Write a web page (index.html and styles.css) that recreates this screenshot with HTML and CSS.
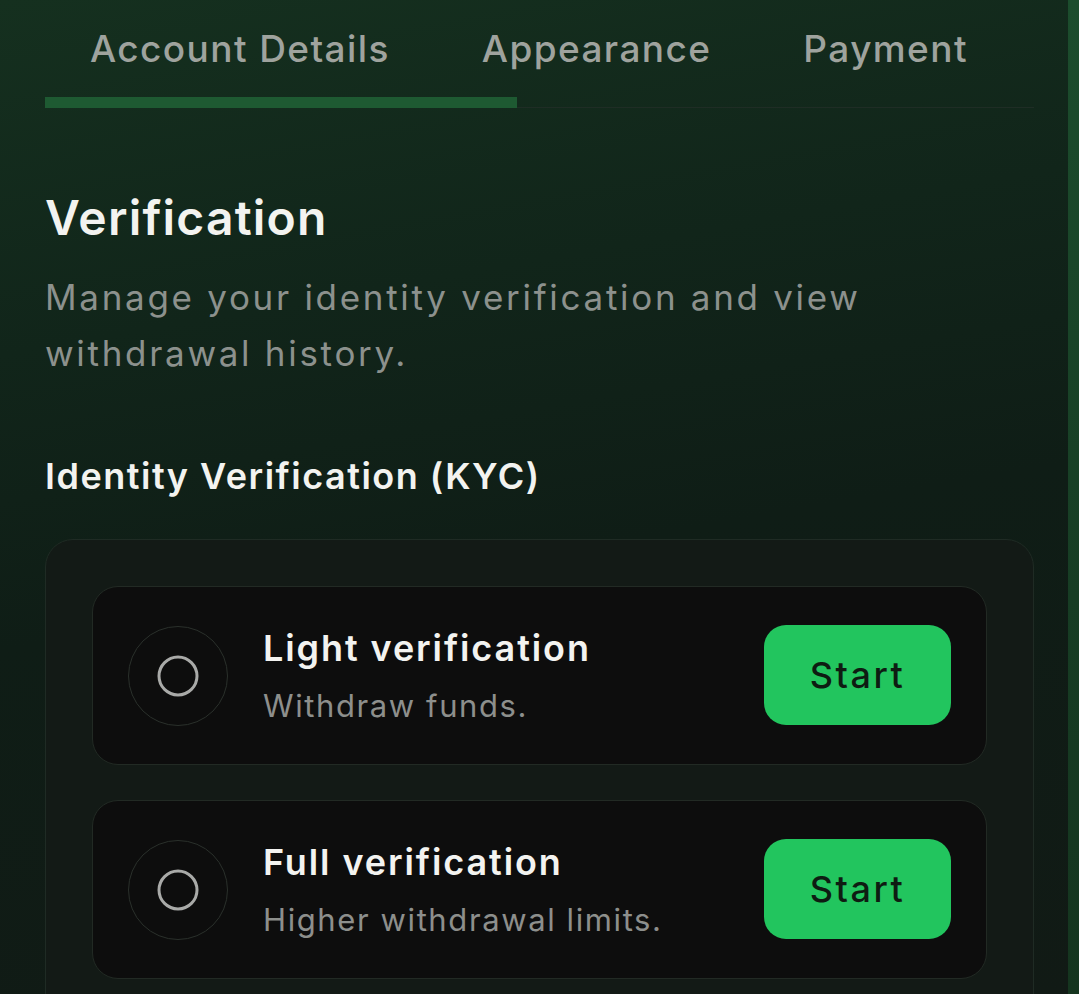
FILE: index.html
```html
<!DOCTYPE html>
<html lang="en">
<head>
  <meta charset="UTF-8" />
  <meta name="viewport" content="width=device-width, initial-scale=1.0"/>
  <title>Settings - Verification</title>
  <link rel="stylesheet" href="styles.css">
</head>
<body>
  <div class="page">
    <main class="panel">
      <nav class="tabs">
        <a class="tab">Account Details</a>
        <a class="tab">Appearance</a>
        <a class="tab">Payment</a>
      </nav>
      <div class="tab-track">
        <div class="indicator"></div>
        <div class="track-rest"></div>
      </div>

      <h2 class="title">Verification</h2>
      <p class="subtitle">Manage your identity verification and view withdrawal history.</p>

      <h3 class="section-title">Identity Verification (KYC)</h3>

      <div class="card">
        <div class="kyc-item">
          <div class="status-ring">
            <svg width="44" height="44" viewBox="0 0 44 44"><circle cx="22" cy="22" r="19" fill="none" stroke="#a9aaa8" stroke-width="3"/></svg>
          </div>
          <div class="kyc-text">
            <div class="kyc-name">Light verification</div>
            <div class="kyc-desc">Withdraw funds.</div>
          </div>
          <button class="start-btn">Start</button>
        </div>

        <div class="kyc-item">
          <div class="status-ring">
            <svg width="44" height="44" viewBox="0 0 44 44"><circle cx="22" cy="22" r="19" fill="none" stroke="#a9aaa8" stroke-width="3"/></svg>
          </div>
          <div class="kyc-text">
            <div class="kyc-name">Full verification</div>
            <div class="kyc-desc">Higher withdrawal limits.</div>
          </div>
          <button class="start-btn">Start</button>
        </div>
      </div>
    </main>
    <div class="edge"></div>
  </div>
</body>
</html>
```

FILE: styles.css
```css
body {
  margin: 0;
  font-family: Inter, "Noto Sans", sans-serif;
  background: #101a14;
  color: #f2f2f0;
  overflow: hidden;
}
.page {
  display: flex;
  height: 994px;
}
.panel {
  flex: 1;
  padding: 0 34px 0 45px;
  background: linear-gradient(170deg, #15301f 0%, #11251a 30%, #0f1d16 55%, #111a15 100%);
}
.edge {
  width: 11px;
  background: linear-gradient(180deg, #1c4d2d 0%, #173d24 60%, #15351f 100%);
}
.tabs {
  display: flex;
  height: 96px;
  align-items: center;
  gap: 92px;
  padding-left: 45px;
}
.tab {
  font-size: 37px;
  font-weight: 500;
  color: #9fa39e;
  letter-spacing: 1.4px;
}
.tab-track {
  display: flex;
  align-items: flex-end;
  height: 12px;
}
.indicator {
  width: 472px;
  height: 11px;
  background: #1e5a32;
}
.track-rest {
  flex: 1;
  height: 1px;
  background: #1f2d25;
}
.title {
  margin: 82px 0 0;
  font-size: 48px;
  line-height: 56px;
  font-weight: 600;
  color: #f3f3f0;
  letter-spacing: 1.2px;
}
.subtitle {
  margin: 23px 0 0;
  max-width: 880px;
  font-size: 35px;
  line-height: 56px;
  color: #8c918d;
  letter-spacing: 2.7px;
}
.section-title {
  margin: 73px 0 0;
  font-size: 36px;
  line-height: 44px;
  font-weight: 600;
  color: #f3f3f0;
  letter-spacing: 1.5px;
}
.card {
  margin-top: 41px;
  padding: 46px;
  border: 1px solid #1f2b24;
  border-radius: 28px;
  background: #131a16;
  display: flex;
  flex-direction: column;
  gap: 35px;
}
.kyc-item {
  display: flex;
  align-items: center;
  height: 177px;
  padding: 0 35px;
  border: 1px solid #222a24;
  border-radius: 26px;
  background: #0d0d0d;
}
.status-ring {
  width: 98px;
  height: 98px;
  flex: none;
  border: 1px solid #2a302b;
  border-radius: 50%;
  display: flex;
  align-items: center;
  justify-content: center;
}
.kyc-text {
  flex: 1;
  margin-left: 35px;
  padding-top: 2px;
}
.kyc-name {
  font-size: 36px;
  line-height: 50px;
  font-weight: 600;
  color: #f3f3f0;
  letter-spacing: 1.9px;
}
.kyc-desc {
  margin-top: 8px;
  font-size: 31px;
  line-height: 50px;
  color: #8d8f8c;
  letter-spacing: 1.6px;
}
.start-btn {
  width: 187px;
  height: 100px;
  margin-top: -2px;
  border: none;
  border-radius: 22px;
  background: #22c55e;
  color: #0e1c12;
  font-family: inherit;
  font-size: 36px;
  font-weight: 500;
  letter-spacing: 2.5px;
}
```
